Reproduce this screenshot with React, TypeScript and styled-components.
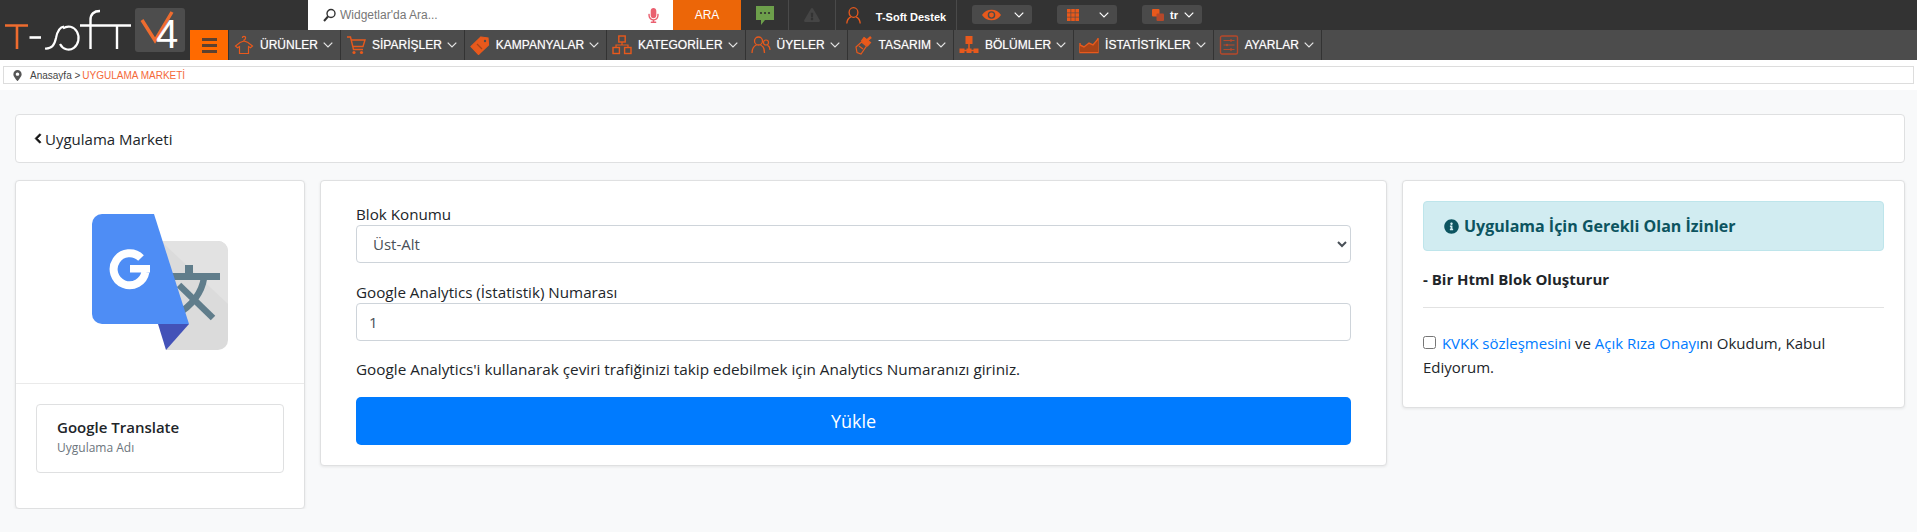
import { ReactNode } from "react";
import { FaChevronLeft, FaExclamationTriangle, FaInfoCircle, FaMapMarkerAlt, FaMicrophone } from "react-icons/fa";
import styled, { createGlobalStyle } from "styled-components";

const ORANGE = "#e8591c";

const GlobalStyle = createGlobalStyle`
  * { box-sizing: border-box; }
  body {
    margin: 0;
    background: #f8f9fa;
    color: #212529;
    font-family: "Open Sans", "Noto Sans", sans-serif;
  }
`;

const Chevron = ({ color = "#fff" }: { color?: string }) => (
  <ChevronSvg viewBox="0 0 10 6" fill="none" stroke={color} strokeWidth="1.2">
    <polyline points="0.7,0.7 5,5 9.3,0.7" />
  </ChevronSvg>
);

const Logo = () => (
  <LogoSvg viewBox="0 0 190 60" fill="none" role="img" aria-label="T-soft V4">
    <path d="M5 25.5H28M17 25.5V49" stroke="#ee6c2f" strokeWidth="2.6" />
    <path d="M29.5 37.5H41" stroke="#fff" strokeWidth="2.6" />
    <path d="M45 48.5C52 49 54.5 45 56 38C57.5 30 60 27 64 26.5" stroke="#fff" strokeWidth="2.2" />
    <path d="M63 28.5A10 11.5 0 1 1 60 44" stroke="#fff" strokeWidth="2.2" />
    <path d="M90.5 49V20C90.5 13.5 94 11 100 11" stroke="#fff" strokeWidth="2.4" />
    <path d="M80 25.5H131M117 25.5V49" stroke="#fff" strokeWidth="2.4" />
    <rect x="135" y="8" width="50" height="44" rx="3" fill="#4d4d4d" />
    <path d="M142 20L155 40.5L172 12" stroke="#ee6c2f" strokeWidth="3.4" />
    <text x="156" y="48" fontFamily="Liberation Sans" fontSize="40" fill="#fff">4</text>
  </LogoSvg>
);

const TranslateLogo = () => (
  <TranslateSvg viewBox="0 0 136 136" role="img" aria-label="Google Translate">
    <path d="M70 27H126a10 10 0 0 1 10 10V126a10 10 0 0 1-10 10H74Z" fill="#dbdbdb" />
    <path d="M70 27H126a10 10 0 0 1 10 10V90L72 30Z" fill="#e2e2e2" />
    <path d="M93 51h8v8h27v7H80v-7h13Z" fill="#607d8b" />
    <path d="M112 64C110 78 100 92 85 100" fill="none" stroke="#607d8b" strokeWidth="6.5" />
    <path d="M87 71L121 104" fill="none" stroke="#607d8b" strokeWidth="6.5" />
    <path d="M10 0H62L97 110H10A10 10 0 0 1 0 100V10A10 10 0 0 1 10 0Z" fill="#4e8df5" />
    <path d="M66 110H97L74 136Z" fill="#4352b8" />
    <path d="M49 44A16 16 0 1 0 53.4 58" fill="none" stroke="#fff" strokeWidth="8" />
    <rect x="38" y="51" width="20" height="7.5" fill="#fff" />
  </TranslateSvg>
);

const NavIcon = ({ children }: { children: ReactNode }) => (
  <NavIconSvg viewBox="0 0 20 20" fill="none" stroke={ORANGE} strokeWidth="1.2">
    {children}
  </NavIconSvg>
);

const navItems: { label: string; icon: ReactNode }[] = [
  {
    label: "ÜRÜNLER",
    icon: (
      <NavIcon>
        <path d="M10 4.5a1.6 1.6 0 1 0-1.6-1.6M10 4.5V6M10 6L6 7.5L1.5 11L3.5 12.8L5.5 11.5V18.5H14.5V11.5L16.5 12.8L18.5 11L14 7.5L10 6Z" />
      </NavIcon>
    ),
  },
  {
    label: "SİPARİŞLER",
    icon: (
      <NavIcon>
        <path d="M1 2H4.5L7.5 14.5H17M5.5 5H19L17 11.5H7" strokeWidth="1.4" />
        <circle cx="8" cy="17.5" r="1.6" fill={ORANGE} stroke="none" />
        <circle cx="15.5" cy="17.5" r="1.6" fill={ORANGE} stroke="none" />
      </NavIcon>
    ),
  },
  {
    label: "KAMPANYALAR",
    icon: (
      <NavIcon>
        <path d="M11 2L18 3L18.5 10L8.5 19.5L1 11.5Z" fill={ORANGE} />
        <circle cx="15" cy="6" r="1.2" fill="#4d4d4d" stroke="none" />
        <path d="M7 9L12 14" stroke="#a84418" />
      </NavIcon>
    ),
  },
  {
    label: "KATEGORİLER",
    icon: (
      <NavIcon>
        <rect x="6.8" y="1" width="6.4" height="6" strokeWidth="1.4" />
        <rect x="1" y="12.5" width="6.4" height="6" strokeWidth="1.4" />
        <rect x="12.6" y="12.5" width="6.4" height="6" strokeWidth="1.4" />
        <path d="M10 7V10H4V12.5M10 10H16V12.5" />
      </NavIcon>
    ),
  },
  {
    label: "ÜYELER",
    icon: (
      <NavIcon>
        <circle cx="7.5" cy="6" r="4" strokeWidth="1.3" />
        <path d="M1 18C1 13.5 3 11 5.5 10M13.5 18C13.5 13.5 12 11 9.5 10" strokeWidth="1.3" />
        <circle cx="15" cy="7.5" r="2.5" />
        <path d="M19 15C19 12.5 18 11 16.5 10.2" />
      </NavIcon>
    ),
  },
  {
    label: "TASARIM",
    icon: (
      <NavIcon>
        <path d="M11 2.5L17.5 7.5L14.5 11L8.5 6Z" fill={ORANGE} />
        <path d="M18 2L14 5.5" strokeWidth="2.4" />
        <path d="M8.5 7L13.5 11L8 19L4 17.5L3 12Z" />
        <path d="M6 11L10 14" />
      </NavIcon>
    ),
  },
  {
    label: "BÖLÜMLER",
    icon: (
      <NavIcon>
        <rect x="6.5" y="1" width="7" height="8" fill={ORANGE} stroke="none" />
        <path d="M10 9V15M3 15.5H17" strokeWidth="1.6" />
        <rect x="0.5" y="13.5" width="5" height="4.5" fill={ORANGE} stroke="none" />
        <rect x="7.5" y="13.5" width="5" height="4.5" fill={ORANGE} stroke="none" />
        <rect x="14.5" y="13.5" width="5" height="4.5" fill={ORANGE} stroke="none" />
      </NavIcon>
    ),
  },
  {
    label: "İSTATİSTİKLER",
    icon: (
      <NavIcon>
        <path d="M1 8V17.5H19V3" strokeWidth="1.4" />
        <path d="M1 17L1 10L5 12L10 8L14 10L19 4V17Z" fill="#a84418" stroke="none" />
        <path d="M1 10L5 12L10 8L14 10L19 4" strokeWidth="1.4" />
      </NavIcon>
    ),
  },
  {
    label: "AYARLAR",
    icon: (
      <NavIcon>
        <rect x="1.5" y="1" width="17" height="18" rx="1.5" stroke="#b5482a" strokeWidth="1.4" />
        <path d="M4.5 5.5H15.5M4.5 10H15.5M4.5 14.5H15.5" stroke="#b5482a" />
        <circle cx="12" cy="5.5" r="1.2" fill="#b5482a" stroke="none" />
        <circle cx="8" cy="10" r="1.2" fill="#b5482a" stroke="none" />
        <circle cx="12" cy="14.5" r="1.2" fill="#b5482a" stroke="none" />
      </NavIcon>
    ),
  },
];

export default function App() {
  return (
    <>
      <GlobalStyle />
      <Header>
        <Logo />
        <HeaderMain>
          <TopBar>
            <SearchBox>
              <svg width="13" height="14" viewBox="0 0 13 14" fill="none" stroke="#333" strokeWidth="1.4">
                <circle cx="8" cy="5.5" r="4" />
                <path d="M5 8.5L1 13" strokeWidth="2" />
              </svg>
              <SearchText>Widgetlar'da Ara...</SearchText>
              <MicIcon />
            </SearchBox>
            <SearchButton>ARA</SearchButton>
            <TopCell $width={48}>
              <svg width="18" height="19" viewBox="0 0 18 19">
                <path d="M0 0H18V14H9L5 19V14H0Z" fill="#6d9f4b" />
                <circle cx="5" cy="7" r="1.1" fill="#2f2f2f" />
                <circle cx="9" cy="7" r="1.1" fill="#2f2f2f" />
                <circle cx="13" cy="7" r="1.1" fill="#2f2f2f" />
              </svg>
            </TopCell>
            <TopCell $width={47}>
              <WarningIcon />
            </TopCell>
            <TopCell $width={121}>
              <svg width="15" height="17" viewBox="0 0 15 17" fill="none" stroke={ORANGE} strokeWidth="1.3">
                <ellipse cx="7.5" cy="5.5" rx="4.4" ry="4.8" />
                <path d="M0.8 16.5C1 13 2.5 11 4.8 9.8M14.2 16.5C14 13 12.5 11 10.2 9.8" />
              </svg>
              <SupportName>T-Soft Destek</SupportName>
            </TopCell>
            <Pills>
              <Pill>
                <svg width="19" height="12" viewBox="0 0 19 12">
                  <path d="M0 6C4 -1 15 -1 19 6C15 13 4 13 0 6Z" fill={ORANGE} />
                  <circle cx="9.5" cy="6" r="3.8" fill="#4a4a4a" />
                  <circle cx="9.5" cy="6" r="2.4" fill={ORANGE} />
                </svg>
                <Chevron />
              </Pill>
              <Pill>
                <svg width="12" height="12" viewBox="0 0 12 12" fill={ORANGE}>
                  {[0, 4.2, 8.4].map((y) =>
                    [0, 4.2, 8.4].map((x) => <rect key={`${x}-${y}`} x={x} y={y} width="3.6" height="3.6" />)
                  )}
                </svg>
                <Chevron />
              </Pill>
              <Pill>
                <svg width="12" height="12" viewBox="0 0 12 12">
                  <rect x="0" y="0" width="7.5" height="7.5" rx="1" fill={ORANGE} />
                  <rect x="4.5" y="4.5" width="7.5" height="7.5" rx="1" fill="#b5482a" />
                </svg>
                <LanguageCode>tr</LanguageCode>
                <Chevron />
              </Pill>
            </Pills>
          </TopBar>
          <NavBar>
            <MenuButton>
              <span />
              <span />
              <span />
            </MenuButton>
            {navItems.map((item) => (
              <NavItem key={item.label}>
                {item.icon}
                <NavLabel>{item.label}</NavLabel>
                <Chevron color="#e6e6e6" />
              </NavItem>
            ))}
          </NavBar>
        </HeaderMain>
      </Header>

      <BreadcrumbStrip>
        <Breadcrumb>
          <PinIcon />
          Anasayfa &gt; <CurrentPage>UYGULAMA MARKETİ</CurrentPage>
        </Breadcrumb>
      </BreadcrumbStrip>

      <Content>
        <TitleCard>
          <BackIcon />
          Uygulama Marketi
        </TitleCard>
        <Columns>
          <AppCard>
            <LogoArea>
              <TranslateLogo />
            </LogoArea>
            <AppInfoArea>
              <AppInfoBox>
                <AppName>Google Translate</AppName>
                <AppNameHint>Uygulama Adı</AppNameHint>
              </AppInfoBox>
            </AppInfoArea>
          </AppCard>

          <FormCard>
            <FieldLabel>Blok Konumu</FieldLabel>
            <Select defaultValue="ust-alt">
              <option value="ust-alt">Üst-Alt</option>
            </Select>
            <FieldLabel $top={19}>Google Analytics (İstatistik) Numarası</FieldLabel>
            <Input defaultValue="1" />
            <HelpText>Google Analytics'i kullanarak çeviri trafiğinizi takip edebilmek için Analytics Numaranızı giriniz.</HelpText>
            <SubmitButton>Yükle</SubmitButton>
          </FormCard>

          <PermissionCard>
            <AlertBox>
              <InfoIcon />
              Uygulama İçin Gerekli Olan İzinler
            </AlertBox>
            <Permission>- Bir Html Blok Oluşturur</Permission>
            <Divider />
            <Consent>
              <input type="checkbox" /> <ConsentLink>KVKK sözleşmesini</ConsentLink> ve{" "}
              <ConsentLink>Açık Rıza Onayı</ConsentLink>nı Okudum, Kabul
              <br />
              Ediyorum.
            </Consent>
          </PermissionCard>
        </Columns>
      </Content>
    </>
  );
}

const Header = styled.header`
  display: flex;
  height: 60px;
  background: #333;
  font-family: "Liberation Sans", Arial, sans-serif;
`;

const LogoSvg = styled.svg`
  flex: 0 0 190px;
  width: 190px;
  height: 60px;
`;

const HeaderMain = styled.div`
  flex: 1;
  display: flex;
  flex-direction: column;
`;

const TopBar = styled.div`
  display: flex;
  height: 30px;
  padding-left: 118px;
`;

const SearchBox = styled.div`
  flex: 0 0 365px;
  display: flex;
  align-items: center;
  padding: 0 13px 0 15px;
  background: #fff;
`;

const SearchText = styled.span`
  flex: 1;
  margin-left: 4px;
  font-size: 12px;
  color: #777;
`;

const MicIcon = styled(FaMicrophone)`
  width: 13px;
  height: 15px;
  color: #ea5f6f;
`;

const SearchButton = styled.div`
  flex: 0 0 68px;
  display: flex;
  align-items: center;
  justify-content: center;
  background: #ec6608;
  color: #fff;
  font-size: 12px;
`;

const TopCell = styled.div<{ $width: number }>`
  flex: 0 0 ${(p) => p.$width}px;
  display: flex;
  align-items: center;
  justify-content: center;
  gap: 15px;
  border-right: 1px solid #4a4a4a;
`;

const WarningIcon = styled(FaExclamationTriangle)`
  width: 16px;
  height: 14px;
  color: #454545;
`;

const SupportName = styled.span`
  padding-top: 4px;
  font-size: 11px;
  font-weight: 700;
  color: #fff;
`;

const Pills = styled.div`
  display: flex;
  gap: 25px;
  padding: 5px 0 0 15px;
`;

const Pill = styled.div`
  width: 60px;
  height: 19px;
  display: flex;
  align-items: center;
  justify-content: space-between;
  padding: 0 8px 0 10px;
  background: #4a4a4a;
  border-radius: 3px;
`;

const LanguageCode = styled.span`
  font-size: 11px;
  font-weight: 700;
  color: #fff;
`;

const ChevronSvg = styled.svg`
  flex: 0 0 10px;
  width: 10px;
  height: 6px;
`;

const NavBar = styled.nav`
  display: flex;
  height: 30px;
  background: #4c4c4c;
`;

const MenuButton = styled.div`
  flex: 0 0 38px;
  display: flex;
  flex-direction: column;
  align-items: center;
  justify-content: center;
  gap: 3px;
  background: #ff6a00;

  span {
    width: 15px;
    height: 3px;
    background: #5c4130;
  }
`;

const NavItem = styled.div`
  display: flex;
  align-items: center;
  padding: 0 7px 0 5px;
  border-left: 1px solid #333;
  &:last-child {
    border-right: 1px solid #333;
  }
`;

const NavIconSvg = styled.svg`
  flex: 0 0 20px;
  width: 20px;
  height: 20px;
  margin-right: 6px;
`;

const NavLabel = styled.span`
  margin-right: 5px;
  font-size: 12px;
  color: #fff;
  text-shadow: 0 0 1px rgba(255, 255, 255, 0.55);
  white-space: nowrap;
`;

const BreadcrumbStrip = styled.div`
  height: 30px;
  padding: 6px 3px;
  background: #fff;
`;

const Breadcrumb = styled.div`
  height: 18px;
  display: flex;
  align-items: center;
  gap: 2px;
  padding-left: 9px;
  border: 1px solid #ddd;
  font-family: "Liberation Sans", Arial, sans-serif;
  font-size: 10px;
  color: #444;
`;

const PinIcon = styled(FaMapMarkerAlt)`
  width: 9px;
  height: 11px;
  margin-right: 6px;
  color: #555;
`;

const CurrentPage = styled.span`
  color: #f4693a;
`;

const Content = styled.main`
  padding: 24px 12px 0 15px;
`;

const TitleCard = styled.div`
  height: 49px;
  display: flex;
  align-items: center;
  padding-left: 18px;
  background: #fff;
  border: 1px solid #dfe0e1;
  border-radius: 4px;
  font-size: 15px;
`;

const BackIcon = styled(FaChevronLeft)`
  width: 8px;
  height: 11px;
  margin-right: 3px;
  color: #111;
  stroke: currentColor;
  stroke-width: 30;
`;

const Columns = styled.div`
  display: grid;
  grid-template-columns: 290px 1067px 1fr;
  gap: 15px;
  align-items: start;
  margin-top: 17px;
`;

const Card = styled.section`
  background: #fff;
  border: 1px solid #dfe0e1;
  border-radius: 4px;
  box-shadow: 0 1px 3px rgba(0, 0, 0, 0.08);
`;

const AppCard = styled(Card)`
  height: 329px;
`;

const LogoArea = styled.div`
  height: 203px;
  display: flex;
  justify-content: center;
  padding-top: 33px;
  border-bottom: 1px solid #eaeaea;
`;

const TranslateSvg = styled.svg`
  width: 136px;
  height: 136px;
`;

const AppInfoArea = styled.div`
  padding: 20px;
`;

const AppInfoBox = styled.div`
  height: 69px;
  padding: 11px 20px;
  border: 1px solid #dfe0e1;
  border-radius: 4px;
`;

const AppName = styled.div`
  font-size: 15px;
  font-weight: 600;
  line-height: 22px;
`;

const AppNameHint = styled.div`
  font-size: 12px;
  line-height: 20px;
  color: #6c757d;
`;

const FormCard = styled(Card)`
  height: 286px;
  padding: 23px 35px 0;
`;

const FieldLabel = styled.label<{ $top?: number }>`
  display: block;
  margin-top: ${(p) => p.$top ?? 0}px;
  font-size: 15.2px;
  line-height: 21px;
`;

const Select = styled.select`
  display: block;
  width: 100%;
  height: 38px;
  padding: 0 12px;
  background: #fff;
  border: 1px solid #ced4da;
  border-radius: 4px;
  color: #495057;
  font-family: inherit;
  font-size: 15px;
`;

const Input = styled.input`
  display: block;
  width: 100%;
  height: 38px;
  padding: 0 12px;
  border: 1px solid #ced4da;
  border-radius: 4px;
  color: #495057;
  font-family: inherit;
  font-size: 15px;
`;

const HelpText = styled.p`
  margin: 17px 0;
  font-size: 15.3px;
  line-height: 22px;
`;

const SubmitButton = styled.button`
  display: block;
  width: 100%;
  height: 48px;
  background: #007bff;
  border: 0;
  border-radius: 5px;
  color: #fff;
  font-family: inherit;
  font-size: 18px;
`;

const PermissionCard = styled(Card)`
  height: 228px;
  padding: 20px;
`;

const AlertBox = styled.div`
  height: 50px;
  display: flex;
  align-items: center;
  padding-left: 20px;
  background: #d1ecf1;
  border: 1px solid #bee5eb;
  border-radius: 4px;
  color: #0c5460;
  font-size: 16px;
  font-weight: 700;
`;

const InfoIcon = styled(FaInfoCircle)`
  width: 15px;
  height: 15px;
  margin-right: 5px;
`;

const Permission = styled.div`
  margin-top: 17px;
  font-size: 15px;
  font-weight: 700;
  line-height: 22px;
`;

const Divider = styled.hr`
  margin: 17px 0 0;
  border: 0;
  border-top: 1px solid #e2e2e2;
`;

const Consent = styled.p`
  margin: 23px 0 0;
  font-size: 15px;
  line-height: 24px;

  input {
    margin: 0 2px 0 0;
  }
`;

const ConsentLink = styled.a`
  color: #007bff;
`;
